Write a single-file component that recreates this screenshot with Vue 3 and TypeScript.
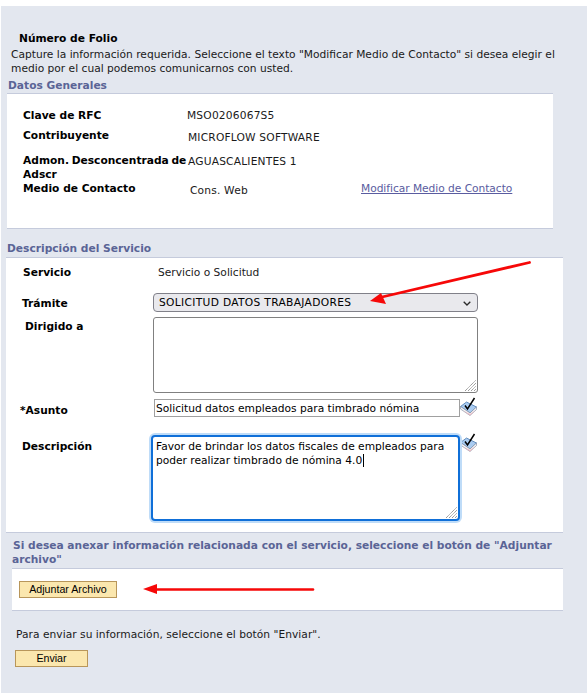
<script setup lang="ts">
import { onMounted, ref } from 'vue'

const tramite = ref('SOLICITUD DATOS TRABAJADORES')
const dirigido = ref('')
const asunto = ref('Solicitud datos empleados para timbrado nómina')
const descripcion = ref(
  'Favor de brindar los datos fiscales de empleados para poder realizar timbrado de nómina 4.0',
)
const descripcionEl = ref<HTMLTextAreaElement | null>(null)

const generales = [
  { label: 'Clave de RFC', value: 'MSO0206067S5', cls: 'g-rfc' },
  { label: 'Contribuyente', value: 'MICROFLOW SOFTWARE', cls: 'g-contrib' },
  { label: 'Admon. Desconcentrada de\nAdscr', value: 'AGUASCALIENTES 1', cls: 'g-admon' },
]

onMounted(() => {
  const el = descripcionEl.value
  if (el) {
    el.focus()
    el.setSelectionRange(el.value.length, el.value.length)
  }
})
</script>

<template>
  <main class="page">
    <h1 class="folio">Número de Folio</h1>
    <p class="intro">
      Capture la información requerida. Seleccione el texto "Modificar Medio de Contacto" si desea elegir el
      medio por el cual podemos comunicarnos con usted.
    </p>

    <h2 class="section-title title-generales">Datos Generales</h2>
    <section class="panel panel-generales">
      <div v-for="row in generales" :key="row.label" class="g-row" :class="row.cls">
        <span class="label">{{ row.label }}</span>
        <span class="value">{{ row.value }}</span>
      </div>
      <div class="g-row g-medio">
        <span class="label">Medio de Contacto</span>
        <span class="value">Cons. Web</span>
        <a class="link" href="#">Modificar Medio de Contacto</a>
      </div>
    </section>

    <h2 class="section-title title-servicio">Descripción del Servicio</h2>
    <section class="panel panel-servicio">
      <div class="s-row s-servicio">
        <span class="label">Servicio</span>
        <span class="value">Servicio o Solicitud</span>
      </div>
      <div class="s-row s-tramite">
        <label class="label" for="tramite">Trámite</label>
        <div class="select-wrap">
          <select id="tramite" v-model="tramite" class="select">
            <option>SOLICITUD DATOS TRABAJADORES</option>
          </select>
          <svg class="chevron" viewBox="0 0 8 5" aria-hidden="true">
            <path d="M.7.7 4 4l3.300-3.300" fill="none" stroke="#2a2a2a" stroke-width="1.300" />
          </svg>
        </div>
      </div>
      <div class="s-row s-dirigido">
        <label class="label" for="dirigido">Dirigido a</label>
        <div class="area-wrap">
          <textarea id="dirigido" v-model="dirigido" class="area area-dirigido"></textarea>
          <svg class="grip" viewBox="0 0 11 11" aria-hidden="true">
            <path d="M0 11 11 0M3 11l8-8M6 11l5-5M9 11l2-2" stroke="#8a8a8a" stroke-width="1" stroke-dasharray="1.200 .5" />
          </svg>
        </div>
      </div>
      <div class="s-row s-asunto">
        <label class="label" for="asunto">*Asunto</label>
        <input id="asunto" v-model="asunto" class="input" type="text" />
        <svg class="spell" viewBox="0 0 17 19" aria-hidden="true">
          <path d="M.5 9.500 6.500 5l10 5-6.500 6z" fill="#a9cbf0" stroke="#4a78ae" stroke-width=".8" />
          <path d="M.5 9.500v2.500l9.500 6.500 6.500-6V10l-6.500 6z" fill="#f8f6f5" stroke="#8591a6" stroke-width=".7" />
          <path d="M3 13.500l7 5 5.500-5-5.500 3.500z" fill="#eab8c0" />
          <path d="M5 8.500l2.500 3.500L14.500 1" fill="none" stroke="#000" stroke-width="1.500" />
        </svg>
      </div>
      <div class="s-row s-descripcion">
        <label class="label" for="descripcion">Descripción</label>
        <div class="area-wrap">
          <textarea id="descripcion" ref="descripcionEl" v-model="descripcion" class="area area-desc"></textarea>
          <span class="caret"></span>
          <svg class="grip grip-desc" viewBox="0 0 11 11" aria-hidden="true">
            <path d="M0 11 11 0M3 11l8-8M6 11l5-5M9 11l2-2" stroke="#8a8a8a" stroke-width="1" stroke-dasharray="1.200 .5" />
          </svg>
        </div>
        <svg class="spell" viewBox="0 0 17 19" aria-hidden="true">
          <path d="M.5 9.500 6.500 5l10 5-6.500 6z" fill="#a9cbf0" stroke="#4a78ae" stroke-width=".8" />
          <path d="M.5 9.500v2.500l9.500 6.500 6.500-6V10l-6.500 6z" fill="#f8f6f5" stroke="#8591a6" stroke-width=".7" />
          <path d="M3 13.500l7 5 5.500-5-5.500 3.500z" fill="#eab8c0" />
          <path d="M5 8.500l2.500 3.500L14.500 1" fill="none" stroke="#000" stroke-width="1.500" />
        </svg>
      </div>
    </section>

    <h2 class="section-title title-anexar">
      Si desea anexar información relacionada con el servicio, seleccione el botón de "Adjuntar archivo"
    </h2>
    <section class="panel panel-anexar">
      <button class="btn btn-adjuntar" type="button">Adjuntar Archivo</button>
    </section>

    <p class="enviar-text">Para enviar su información, seleccione el botón "Enviar".</p>
    <button class="btn btn-enviar" type="button">Enviar</button>

    <svg class="arrows" viewBox="0 0 587 693" aria-hidden="true">
      <path d="M529.500 262.500 382 297" stroke="#f60808" stroke-width="2.800" fill="none" stroke-linecap="round" />
      <path d="M370 301 381 293 386 304z" fill="#f60808" />
      <path d="M313 589.500H156" stroke="#f60808" stroke-width="2.600" fill="none" stroke-linecap="round" />
      <path d="M143 589 157 584v10z" fill="#f60808" />
    </svg>
  </main>
</template>

<style>
html,
body {
  background: #fff;
}
</style>

<style scoped>
.page {
  position: relative;
  box-sizing: border-box;
  height: 687px;
  margin: 6px 0 0 1px;
  padding-top: 26px;
  background: #e3e7ef;
  font-family: "DejaVu Sans", Verdana, sans-serif;
  font-size: 10.67px;
  line-height: 14px;
  color: #1a1a1a;
  overflow: hidden;
}

.folio {
  margin: 0 0 0 18px;
  font-size: 10.67px;
  line-height: 14px;
  font-weight: 700;
  color: #000;
}

.intro {
  margin: 2px 0 0 10px;
  width: 552px;
}

.section-title {
  margin: 0;
  font-size: 10.67px;
  line-height: 14px;
  font-weight: 700;
  color: #5a6496;
}
.title-generales {
  margin: 3px 0 0 7px;
}
.title-servicio {
  margin: 13px 0 0 6px;
}
.title-anexar {
  width: 550px;
  margin: 6px 0 0 11px;
  text-indent: 1px;
}

.panel {
  box-sizing: border-box;
  background: #fff;
  border-top: 1px solid #c5cbdc;
  border-bottom: 1px solid #c5cbdc;
}
.panel-generales {
  width: 546px;
  height: 136px;
  margin: 0 0 0 6px;
  padding: 15px 0 0 16px;
}
.panel-servicio {
  width: 557px;
  height: 276px;
  margin: 1px 0 0 5px;
}
.panel-anexar {
  width: 551px;
  height: 43px;
  margin: 1px 0 0 11px;
  padding: 12px 0 0 7px;
}

.label {
  font-weight: 700;
  color: #000;
}

.g-row {
  display: grid;
  grid-template-columns: 164px auto 1fr;
}
.g-row .value {
  letter-spacing: .18px;
}
.g-contrib {
  margin-top: 6px;
}
.g-contrib .value {
  margin: 2px 0 0 1px;
}
.g-admon {
  margin-top: 9px;
}
.g-admon .label {
  white-space: pre-line;
  word-spacing: -1px;
}
.g-admon .value {
  margin: 1px 0 0 1px;
}
.g-medio {
  grid-template-columns: 167px 171px 1fr;
}
.g-medio .value {
  margin-top: 2px;
}
.link {
  color: #5a5ca0;
  letter-spacing: -.04px;
  text-decoration: underline;
}

.s-row {
  position: relative;
  display: flex;
  align-items: flex-start;
}
.s-servicio {
  padding: 8px 0 0 17px;
}
.s-servicio .label {
  width: 135px;
}
.s-tramite {
  margin-top: 13px;
  padding-left: 16px;
}
.s-tramite .label {
  width: 132px;
  padding-top: 4px;
  margin-right: -1px;
}
.s-dirigido {
  margin-top: 5px;
  padding-left: 19px;
}
.s-dirigido .label {
  width: 128px;
  padding-top: 3px;
}
.s-asunto {
  margin-top: 6px;
  padding-left: 14px;
}
.s-asunto .label {
  width: 134px;
  padding-top: 5px;
}
.s-descripcion {
  margin-top: 17px;
  padding-left: 16px;
}
.s-descripcion .label {
  width: 129px;
  padding-top: 5px;
}

.select-wrap,
.area-wrap {
  position: relative;
}
.select {
  display: block;
  box-sizing: border-box;
  width: 325px;
  height: 19px;
  padding: 0 0 0 5px;
  border: 1px solid #808089;
  border-radius: 4px;
  background-color: #e9e9ed;
  appearance: none;
  font: 10.67px "DejaVu Sans", Verdana, sans-serif;
  letter-spacing: .32px;
  color: #000;
}
.chevron {
  position: absolute;
  right: 7px;
  top: 8px;
  width: 8px;
  height: 5px;
}

.area {
  box-sizing: border-box;
  display: block;
  margin: 0;
  padding: 2px;
  resize: none;
  font: 10.67px/14px "DejaVu Sans", Verdana, sans-serif;
  color: #000;
  background: #fff;
}
.area-dirigido {
  width: 325px;
  height: 76px;
  border: 1px solid #808080;
  border-radius: 3px;
}
.area-desc {
  width: 309px;
  height: 86px;
  padding: 3px;
  border: 2px solid #0f6fd8;
  border-radius: 4px;
  outline: none;
  box-shadow: 0 0 0 2px #bfdcf8;
  caret-color: transparent;
}
.caret {
  position: absolute;
  left: 212px;
  top: 19px;
  width: 1px;
  height: 13px;
  background: #000;
}
.grip {
  position: absolute;
  right: 2px;
  bottom: 2px;
  width: 11px;
  height: 11px;
}
.grip-desc {
  right: 3px;
  bottom: 3px;
}

.input {
  box-sizing: border-box;
  width: 306px;
  height: 18px;
  padding: 0 2px 0 1px;
  border: 1px solid #a0a0a0;
  background: #fff;
  font: 10.67px "DejaVu Sans", Verdana, sans-serif;
  color: #000;
  outline: none;
}

.spell {
  width: 17px;
  height: 19px;
  flex: none;
  margin-top: -2px;
}

.btn {
  display: block;
  box-sizing: border-box;
  height: 17px;
  padding: 0;
  border: 1px solid #b8965a;
  background: #fbe7ae;
  font-family: "Liberation Sans", Arial, sans-serif;
  font-size: 10.67px;
  line-height: 15px;
  color: #000;
}
.btn-adjuntar {
  width: 98px;
}
.enviar-text {
  margin: 17px 0 0 15px;
  letter-spacing: .035px;
}
.btn-enviar {
  width: 73px;
  margin: 8px 0 0 14px;
}

.arrows {
  position: absolute;
  left: -1px;
  top: -6px;
  width: 587px;
  height: 693px;
  pointer-events: none;
}
</style>
